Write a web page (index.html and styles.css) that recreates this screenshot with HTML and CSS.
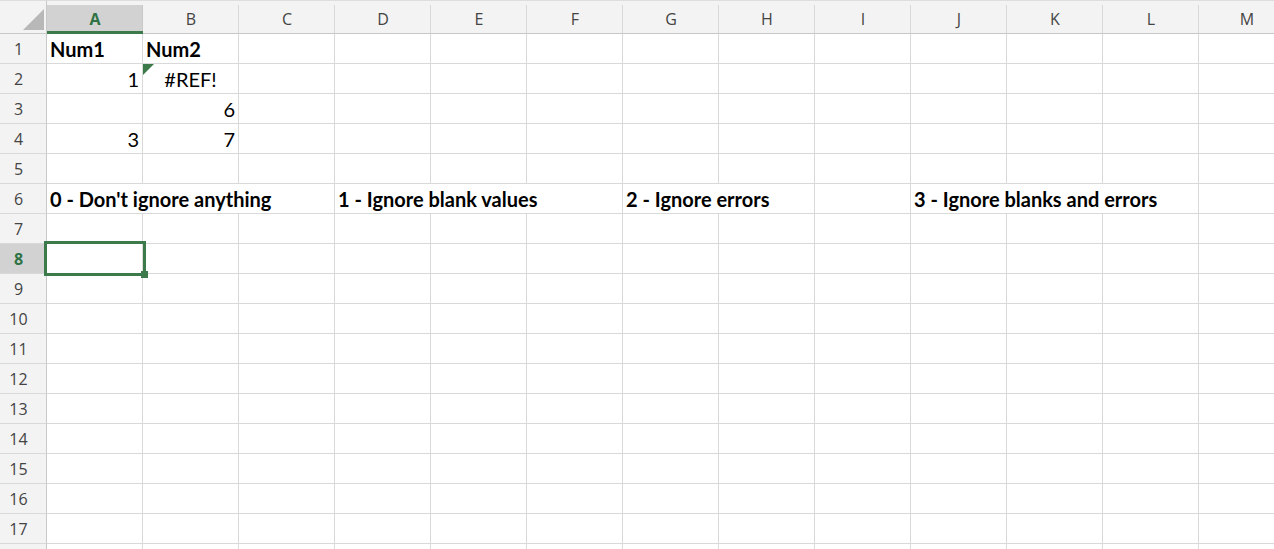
FILE: index.html
```html
<!DOCTYPE html>
<html>
<head>
	<meta charset="utf-8">
	<title>Sheet1</title>
	<link rel="stylesheet" href="styles.css">
</head>
<body>
	<div class="sheet">
		<div class="corner"><span class="corner-tri"></span></div>
		<div class="col-head col-sel">A</div>
		<div class="col-head">B</div>
		<div class="col-head">C</div>
		<div class="col-head">D</div>
		<div class="col-head">E</div>
		<div class="col-head">F</div>
		<div class="col-head">G</div>
		<div class="col-head">H</div>
		<div class="col-head">I</div>
		<div class="col-head">J</div>
		<div class="col-head">K</div>
		<div class="col-head">L</div>
		<div class="col-head">M</div>

		<div class="row-head">1</div>
		<div class="row-head">2</div>
		<div class="row-head">3</div>
		<div class="row-head">4</div>
		<div class="row-head">5</div>
		<div class="row-head">6</div>
		<div class="row-head">7</div>
		<div class="row-head row-sel">8</div>
		<div class="row-head">9</div>
		<div class="row-head">10</div>
		<div class="row-head">11</div>
		<div class="row-head">12</div>
		<div class="row-head">13</div>
		<div class="row-head">14</div>
		<div class="row-head">15</div>
		<div class="row-head">16</div>
		<div class="row-head">17</div>
		<div class="row-head"></div>

		<!-- data -->
		<div class="cell bold a1">Num1</div>
		<div class="cell bold b1">Num2</div>
		<div class="cell num a2">1</div>
		<div class="cell err b2">#REF!</div>
		<div class="cell num b3">6</div>
		<div class="cell num a4">3</div>
		<div class="cell num b4">7</div>

		<!-- long labels run over the next cells -->
		<div class="cell bold over a6">0 - Don't ignore anything</div>
		<div class="cell bold over d6">1 - Ignore blank values</div>
		<div class="cell bold over g6">2 - Ignore errors</div>
		<div class="cell bold over j6">3 - Ignore blanks and errors</div>

		<div class="selection"><span class="handle"></span></div>
	</div>
</body>
</html>
```

FILE: styles.css
```css
*
{
	margin: 0;
	padding: 0;
	box-sizing: border-box;
}
body
{
	overflow: hidden;
	background: #fff;
}
.sheet
{
	display: grid;
	grid-template-columns: 47px repeat(13, 96px);
	grid-template-rows: 34px repeat(18, 30px);
	width: 1295px;
	background-color: #fff;
	background-image: linear-gradient(to right, #d9d9d9 1px, transparent 1px),
		linear-gradient(to bottom, #d9d9d9 1px, transparent 1px);
	background-size: 96px 100%, 100% 30px;
	background-position: 46px 0, 0 33px;
	font-family: Lato, "Open Sans", sans-serif;
	font-size: 20px;
	color: #000;
}

/* headers */
.corner
{
	display: flex;
	align-items: flex-end;
	justify-content: flex-end;
	padding: 0 2px 3px 0;
	background: #f3f3f3;
	border-top: 1px solid #dedede;
	border-right: 1px solid #c8c8c8;
	border-bottom: 1px solid #c8c8c8;
}
.corner-tri
{
	width: 0;
	height: 0;
	border-bottom: 21px solid #b8b8b8;
	border-left: 21px solid transparent;
}
.col-head,
.row-head
{
	display: flex;
	align-items: center;
	justify-content: center;
	font-family: "Open Sans", "Noto Sans", sans-serif;
	font-size: 16px;
	color: #444;
}
.col-head
{
	padding-top: 4px;
	background: linear-gradient(#d9d9d9, #d9d9d9) right bottom / 1px 28px no-repeat, #f3f3f3;
	border-top: 1px solid #dedede;
	border-bottom: 1px solid #c8c8c8;
}
.col-sel
{
	background: linear-gradient(#c8c8c8, #c8c8c8) right bottom / 1px 26px no-repeat,
		linear-gradient(#d2d2d2, #d2d2d2) left bottom / 100% 26px no-repeat, #f3f3f3;
	border-bottom: 3px solid #3c7a4b;
	padding-top: 6px;
	color: #2f7345;
	font-weight: 700;
}
.row-head
{
	grid-column: 1;
	padding-right: 9px;
	background: #f3f3f3;
	border-right: 1px solid #c8c8c8;
	border-bottom: 1px solid #d9d9d9;
}
.row-sel
{
	background: #d2d2d2;
	color: #2f7345;
	font-weight: 700;
}

/* cells */
.cell
{
	display: flex;
	align-items: flex-end;
	padding: 0 4px 5px 3px;
	line-height: 1;
	white-space: nowrap;
}
.bold
{
	font-weight: 700;
}
.num
{
	justify-content: flex-end;
}
.err
{
	position: relative;
	justify-content: center;
}
.err::before   /*green error mark*/
{
	content: "";
	position: absolute;
	left: 0;
	top: 0;
	border-top: 11px solid #3c7a4b;
	border-right: 11px solid transparent;
}
.over
{
	background: #fff;
	border-right: 1px solid #d9d9d9;
	border-bottom: 1px solid #d9d9d9;
	padding-bottom: 4px;
}
.a1 { grid-area: 2 / 2; }
.b1 { grid-area: 2 / 3; }
.a2 { grid-area: 3 / 2; }
.b2 { grid-area: 3 / 3; }
.b3 { grid-area: 4 / 3; }
.a4 { grid-area: 5 / 2; }
.b4 { grid-area: 5 / 3; }
.a6 { grid-area: 7 / 2 / 8 / 5; }
.d6 { grid-area: 7 / 5 / 8 / 8; }
.g6 { grid-area: 7 / 8 / 8 / 10; }
.j6 { grid-area: 7 / 11 / 8 / 14; }

/* active cell A8 */
.selection
{
	grid-area: 9 / 2;
	position: relative;
	margin: -3px -3px -2px -3px;
	border: 3px solid #3c7a4b;
	z-index: 2;
}
.handle
{
	position: absolute;
	left: 94px;
	top: 27px;
	width: 7px;
	height: 7px;
	background: #3c7a4b;
}
```
